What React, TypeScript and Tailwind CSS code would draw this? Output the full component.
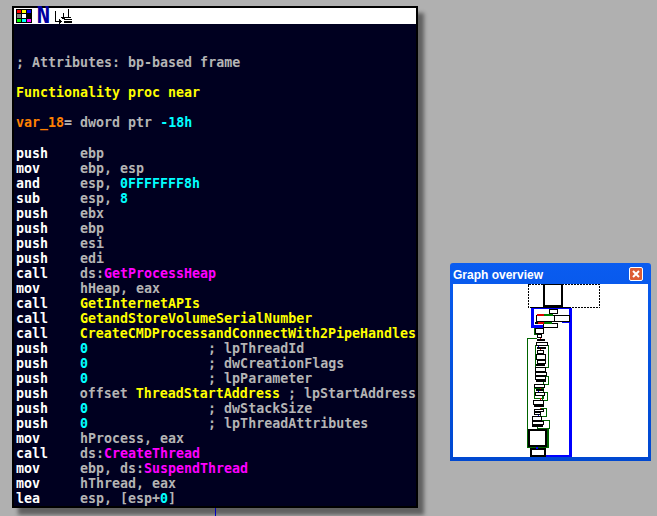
const gray = "text-[#b4b4b4]";
const white = "text-white";
const yellow = "text-[#ffff00]";
const pink = "text-[#ff00ff]";
const cyan = "text-[#00ffff]";

const Code = ({ op, children }: { op: string; children: React.ReactNode }) => (
    <div className="flex h-[15px]">
        <span className={`w-16 ${white}`}>{op}</span>
        <span className={gray}>{children}</span>
    </div>
);

const Y = ({ children }: { children: React.ReactNode }) => <span className={yellow}>{children}</span>;
const P = ({ children }: { children: React.ReactNode }) => <span className={pink}>{children}</span>;
const C = ({ children }: { children: React.ReactNode }) => <span className={cyan}>{children}</span>;

const Arg = ({ op, name }: { op: string; name: string }) => (
    <Code op={op}>
        <C>0</C>
        {"               ; "}
        {name}
    </Code>
);

const PaletteIcon = () => (
    <svg width="16" height="14" viewBox="0 0 16 14" shapeRendering="crispEdges">
        <rect width="16" height="14" fill="#000" />
        <rect x="1" y="1" width="4" height="3" fill="#ff0000" />
        <rect x="6" y="1" width="4" height="3" fill="#ffff00" />
        <rect x="11" y="1" width="4" height="3" fill="#0000ff" />
        <rect x="1" y="5" width="4" height="4" fill="#808080" />
        <rect x="6" y="5" width="4" height="4" fill="#fff" />
        <rect x="1" y="10" width="4" height="3" fill="#00ff00" />
        <rect x="6" y="10" width="4" height="3" fill="#00ffff" />
        <rect x="11" y="10" width="4" height="3" fill="#ff00ff" />
    </svg>
);

const LayoutIcon = () => (
    <svg width="18" height="16" viewBox="0 0 18 16" shapeRendering="crispEdges" fill="#000">
        <rect x="0" y="3" width="1" height="11" />
        <rect x="0" y="13" width="5" height="1" />
        <rect x="4" y="11" width="1" height="5" />
        <rect x="5" y="12" width="1" height="3" />
        <rect x="6" y="13" width="1" height="1" />
        <rect x="8" y="5" width="1" height="6" />
        <rect x="6" y="9" width="5" height="1" />
        <rect x="7" y="10" width="3" height="1" />
        <rect x="13" y="1" width="1" height="9" />
        <rect x="11" y="9" width="5" height="1" />
        <rect x="9" y="11" width="8" height="1" />
        <rect x="9" y="13" width="8" height="2" />
    </svg>
);

// x, y, width, height in page pixels
const boxes: [number, number, number, number][] = [
    [549, 309, 8, 4], [536, 315, 18, 6], [554, 315, 15, 6], [543, 323, 14, 4],
    [535, 328, 8, 5], [537, 334, 4, 3],
    [536, 342, 11, 3], [537, 350, 6, 3], [536, 354, 9, 5], [537, 360, 8, 3],
    [535, 367, 10, 4], [535, 372, 11, 3], [535, 376, 10, 3],
    [534, 384, 10, 3], [535, 392, 9, 3], [533, 400, 10, 4],
    [534, 409, 9, 2], [534, 412, 6, 2], [532, 416, 9, 4], [532, 421, 11, 3],
];

const bars: [number, number, number, string][] = [
    [535, 322, 8, "#000"], [537, 339, 8, "#000"], [537, 347, 9, "#000"], [536, 364, 9, "#000"],
    [536, 380, 10, "#000"], [536, 389, 8, "#000"], [534, 405, 10, "#000"], [532, 425, 11, "#000"],
    [544, 314, 9, "#008000"], [537, 314, 7, "#e00000"], [538, 322, 6, "#e00000"], [544, 322, 8, "#008000"],
];

const greens: [number, number, number, number][] = [
    [535, 345, 13, 22], [543, 376, 5, 8], [534, 388, 9, 10], [542, 392, 5, 8], [540, 408, 6, 8], [537, 420, 12, 8],
];

const OverviewDiagram = () => (
    <svg className="w-full h-full" viewBox="453 284 195 173" shapeRendering="crispEdges">
        <rect x="528.5" y="284.5" width="71" height="23" fill="none" stroke="#000" strokeWidth="1" strokeDasharray="2 1" />
        <rect x="544" y="284" width="18" height="22" fill="#fff" stroke="#000" strokeWidth="2" />
        <path d="M532 307.5H570" stroke="#000" strokeWidth="1" />
        <path d="M532 308.5H570" stroke="#0000ff" strokeWidth="1" />
        <path d="M532.5 308V326H552" fill="none" stroke="#0000ff" strokeWidth="3" />
        <path d="M570.5 308V457M537 456H570" fill="none" stroke="#0000ff" strokeWidth="3" />
        <path d="M562 322H570" stroke="#0000ff" strokeWidth="2" />
        <path d="M535 328V333H537" fill="none" stroke="#006400" strokeWidth="3" />
        <path d="M537 338.5H527.5V447H548V428" fill="none" stroke="#006400" strokeWidth="1" />
        <path d="M547.5 428V447" stroke="#006400" strokeWidth="3" />
        {greens.map(([x, y, w, h]) => (
            <rect key={`${x}-${y}`} x={x + 0.5} y={y + 0.5} width={w} height={h} fill="none" stroke="#006400" strokeWidth="1" />
        ))}
        <path d="M540 338V428" stroke="#e00000" strokeWidth="1" strokeDasharray="2 8" />
        <path d="M538 345V430" stroke="#0000ff" strokeWidth="1" strokeDasharray="2 21" />
        {boxes.map(([x, y, w, h]) => (
            <rect key={`${x}-${y}`} x={x + 0.5} y={y + 0.5} width={w} height={h} fill="#fff" stroke="#000" strokeWidth="1" />
        ))}
        {bars.map(([x, y, w, c]) => (
            <rect key={`${x}-${y}`} x={x} y={y} width={w} height="2" fill={c} />
        ))}
        <rect x="529" y="430" width="17" height="16" fill="#fff" stroke="#000" strokeWidth="2" />
        <rect x="531" y="449" width="14" height="7" fill="#fff" stroke="#000" strokeWidth="2" />
        <path d="M537 447V449" stroke="#0000ff" strokeWidth="1.5" />
    </svg>
);

export default function App() {
    return (
        <div className="relative w-[657px] h-[516px] overflow-hidden bg-[#b0b0b0] pl-3 pt-1.5 font-['DejaVu_Sans_Mono',monospace] text-[13.3px] leading-[15px] font-bold whitespace-pre">
            <div className="absolute left-[215px] top-[508px] w-px h-2 bg-[#0000c0]"></div>

            {/* code node */}
            <div className="w-[406px] h-[502px] border-2 border-black bg-[#000020] shadow-[6px_7px_4px_rgba(0,0,0,0.45)]">
                <div className="flex items-center h-4 bg-white pl-[2px] gap-[6px]">
                    <PaletteIcon />
                    <span className="w-[11px] flex justify-center font-['Liberation_Mono',monospace] text-[23px] leading-4 font-bold text-[#0000a0] scale-y-110">N</span>
                    <LayoutIcon />
                </div>
                <div className="pl-[2px] pt-[31px]">
                    <div className={`h-[15px] ${gray}`}>; Attributes: bp-based frame</div>
                    <div className="h-[15px]"></div>
                    <div className={`h-[15px] ${yellow}`}>Functionality proc near</div>
                    <div className="h-[15px]"></div>
                    <div className={`h-[15px] ${gray}`}>
                        <span className="text-[#ff8000]">var_18</span>= dword ptr <C>-18h</C>
                    </div>
                    <div className="h-[16px]"></div>
                    <Code op="push">ebp</Code>
                    <Code op="mov">ebp, esp</Code>
                    <Code op="and">esp, <C>0FFFFFFF8h</C></Code>
                    <Code op="sub">esp, <C>8</C></Code>
                    <Code op="push">ebx</Code>
                    <Code op="push">ebp</Code>
                    <Code op="push">esi</Code>
                    <Code op="push">edi</Code>
                    <Code op="call">ds:<P>GetProcessHeap</P></Code>
                    <Code op="mov">hHeap, eax</Code>
                    <Code op="call"><Y>GetInternetAPIs</Y></Code>
                    <Code op="call"><Y>GetandStoreVolumeSerialNumber</Y></Code>
                    <Code op="call"><Y>CreateCMDProcessandConnectWith2PipeHandles</Y></Code>
                    <Arg op="push" name="lpThreadId" />
                    <Arg op="push" name="dwCreationFlags" />
                    <Arg op="push" name="lpParameter" />
                    <Code op="push">offset <Y>ThreadStartAddress</Y> ; lpStartAddress</Code>
                    <Arg op="push" name="dwStackSize" />
                    <Arg op="push" name="lpThreadAttributes" />
                    <Code op="mov">hProcess, eax</Code>
                    <Code op="call">ds:<P>CreateThread</P></Code>
                    <Code op="mov">ebp, ds:<P>SuspendThread</P></Code>
                    <Code op="mov">hThread, eax</Code>
                    <Code op="lea">esp, [esp+<C>0</C>]</Code>
                </div>
            </div>

            {/* floating overview window */}
            <div className="absolute left-[450px] top-[263px] w-[201px] h-[198px] flex flex-col bg-gradient-to-b from-[#0a5cf0] to-[#0048d0] rounded-t-[3px] px-[3px] pb-[4px]">
                <div className="flex items-center justify-between h-[21px] shrink-0 pr-[5px]">
                    <span className="pt-[3px] font-['Liberation_Sans',sans-serif] text-[12px] leading-4 font-bold text-white">Graph overview</span>
                    <span className="flex items-center justify-center w-[14px] h-[14px] rounded-[2px] border border-white bg-[#dc5c34] text-white">
                        <svg width="8" height="8" viewBox="0 0 8 8">
                            <path d="M1 1L7 7M7 1L1 7" stroke="#fff" strokeWidth="2" />
                        </svg>
                    </span>
                </div>
                <div className="flex-1 bg-white overflow-hidden">
                    <OverviewDiagram />
                </div>
            </div>
        </div>
    );
}
